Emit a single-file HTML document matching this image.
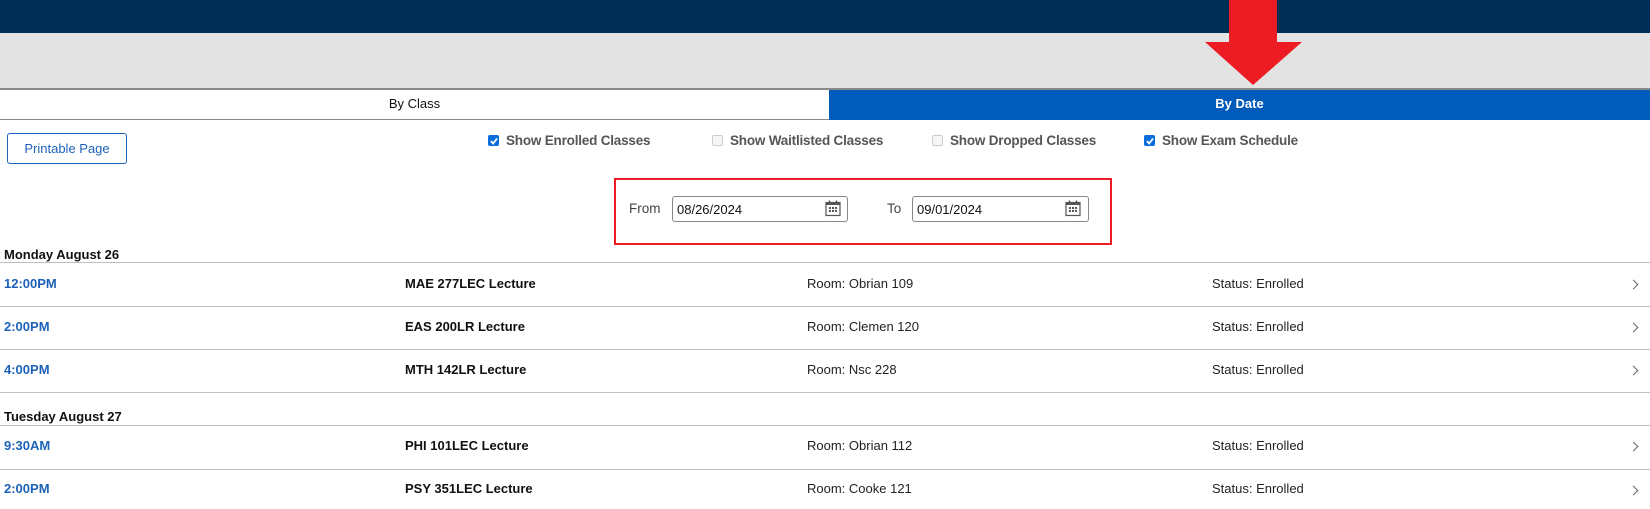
<!DOCTYPE html>
<html><head><meta charset="utf-8"><style>
*{margin:0;padding:0;box-sizing:border-box}
body{width:1650px;height:509px;overflow:hidden;background:#fff;font-family:"Liberation Sans",Arial,sans-serif;position:relative;color:#111}
.a{position:absolute;white-space:nowrap}
.cb{position:absolute;width:11px;height:11px;border-radius:2px}
.on{background:#0a6ddc}
.off{border:1px solid #ccc;background:#f6f6f6}
.lbl{font-size:13.5px;color:#555;font-weight:bold;letter-spacing:-0.2px}
.hr{position:absolute;left:0;width:1650px;height:1px;background:#c4bfbb}
.t{font-size:13px;color:#1d62b8;font-weight:bold}
.c{font-size:13px;font-weight:bold;color:#111}
.r{font-size:13px;color:#222}
.ch{position:absolute;width:7px;height:7px;border-top:1.3px solid #666;border-right:1.3px solid #666;transform:rotate(45deg)}
.inp{position:absolute;height:26px;border:1px solid #888;border-radius:3px;background:#fff;font-size:13px;padding:5px 0 0 4px}
</style></head><body>
<div class="a" style="left:0;top:0;width:1650px;height:33px;background:#002f56"></div>
<div class="a" style="left:0;top:33px;width:1650px;height:55px;background:#e3e3e3"></div>
<div class="a" style="left:0;top:88px;width:1650px;height:2px;background:#8a8a8a"></div>
<div class="a" style="left:0;top:90px;width:829px;height:30px;font-size:13px;text-align:center;line-height:28px">By Class</div>
<div class="a" style="left:829px;top:90px;width:821px;height:30px;background:#005bbb;color:#fff;font-size:13px;font-weight:bold;text-align:center;line-height:28px">By Date</div>
<div class="a" style="left:0;top:119px;width:829px;height:1px;background:#8a8a8a"></div>
<svg class="a" style="left:1200px;top:0" width="110" height="90"><polygon points="29,0 77,0 77,42 102,42 53,85 5,42 29,42" fill="#ed1c24"/></svg>
<div class="a" style="left:7px;top:133px;width:120px;height:31px;border:1px solid #1d62b8;border-radius:3px;color:#1d62b8;font-size:13px;text-align:center;line-height:29px">Printable Page</div>
<div class="cb on" style="left:488px;top:135px"></div><svg class="a" style="left:489px;top:136px" width="10" height="10"><path d="M2 5 L4.2 7.5 L8 2.5" stroke="#fff" stroke-width="1.8" fill="none"/></svg>
<div class="a lbl" style="left:506px;top:133px">Show Enrolled Classes</div>
<div class="cb off" style="left:712px;top:135px"></div>
<div class="a lbl" style="left:730px;top:133px">Show Waitlisted Classes</div>
<div class="cb off" style="left:932px;top:135px"></div>
<div class="a lbl" style="left:950px;top:133px">Show Dropped Classes</div>
<div class="cb on" style="left:1144px;top:135px"></div><svg class="a" style="left:1145px;top:136px" width="10" height="10"><path d="M2 5 L4.2 7.5 L8 2.5" stroke="#fff" stroke-width="1.8" fill="none"/></svg>
<div class="a lbl" style="left:1162px;top:133px">Show Exam Schedule</div>
<div class="a" style="left:614px;top:178px;width:498px;height:67px;border:2px solid #ed1c24"></div>
<div class="a" style="left:629px;top:201px;font-size:13.5px;color:#444">From</div>
<div class="inp" style="left:672px;top:196px;width:176px">08/26/2024</div>
<div class="a" style="left:887px;top:201px;font-size:13.5px;color:#444">To</div>
<div class="inp" style="left:912px;top:196px;width:177px">09/01/2024</div>
<svg class="a" style="left:825px;top:200px" width="16" height="17"><rect x="1" y="2.5" width="14" height="13" fill="none" stroke="#555" stroke-width="1.2"/><rect x="1" y="2.5" width="14" height="2.5" fill="#555"/><line x1="4.5" y1="0.5" x2="4.5" y2="3" stroke="#555" stroke-width="1.5"/><line x1="11.5" y1="0.5" x2="11.5" y2="3" stroke="#555" stroke-width="1.5"/><g fill="#555"><rect x="4" y="7" width="2" height="2"/><rect x="7" y="7" width="2" height="2"/><rect x="10" y="7" width="2" height="2"/><rect x="4" y="10" width="2" height="2"/><rect x="7" y="10" width="2" height="2"/><rect x="10" y="10" width="2" height="2"/></g></svg>
<svg class="a" style="left:1065px;top:200px" width="16" height="17"><rect x="1" y="2.5" width="14" height="13" fill="none" stroke="#555" stroke-width="1.2"/><rect x="1" y="2.5" width="14" height="2.5" fill="#555"/><line x1="4.5" y1="0.5" x2="4.5" y2="3" stroke="#555" stroke-width="1.5"/><line x1="11.5" y1="0.5" x2="11.5" y2="3" stroke="#555" stroke-width="1.5"/><g fill="#555"><rect x="4" y="7" width="2" height="2"/><rect x="7" y="7" width="2" height="2"/><rect x="10" y="7" width="2" height="2"/><rect x="4" y="10" width="2" height="2"/><rect x="7" y="10" width="2" height="2"/><rect x="10" y="10" width="2" height="2"/></g></svg>

<div class="a c" style="left:4px;top:247px">Monday August 26</div>
<div class="hr" style="top:262px"></div>
<div class="a t" style="left:4px;top:276px">12:00PM</div><div class="a c" style="left:405px;top:276px">MAE 277LEC Lecture</div><div class="a r" style="left:807px;top:276px">Room: Obrian 109</div><div class="a r" style="left:1212px;top:276px">Status: Enrolled</div><div class="ch" style="left:1630px;top:281px"></div>
<div class="hr" style="top:306px"></div>
<div class="a t" style="left:4px;top:319px">2:00PM</div><div class="a c" style="left:405px;top:319px">EAS 200LR Lecture</div><div class="a r" style="left:807px;top:319px">Room: Clemen 120</div><div class="a r" style="left:1212px;top:319px">Status: Enrolled</div><div class="ch" style="left:1630px;top:324px"></div>
<div class="hr" style="top:349px"></div>
<div class="a t" style="left:4px;top:362px">4:00PM</div><div class="a c" style="left:405px;top:362px">MTH 142LR Lecture</div><div class="a r" style="left:807px;top:362px">Room: Nsc 228</div><div class="a r" style="left:1212px;top:362px">Status: Enrolled</div><div class="ch" style="left:1630px;top:367px"></div>
<div class="hr" style="top:392px"></div>
<div class="a c" style="left:4px;top:409px">Tuesday August 27</div>
<div class="hr" style="top:425px"></div>
<div class="a t" style="left:4px;top:438px">9:30AM</div><div class="a c" style="left:405px;top:438px">PHI 101LEC Lecture</div><div class="a r" style="left:807px;top:438px">Room: Obrian 112</div><div class="a r" style="left:1212px;top:438px">Status: Enrolled</div><div class="ch" style="left:1630px;top:443px"></div>
<div class="hr" style="top:469px"></div>
<div class="a t" style="left:4px;top:481px">2:00PM</div><div class="a c" style="left:405px;top:481px">PSY 351LEC Lecture</div><div class="a r" style="left:807px;top:481px">Room: Cooke 121</div><div class="a r" style="left:1212px;top:481px">Status: Enrolled</div><div class="ch" style="left:1630px;top:487px"></div>
</body></html>
